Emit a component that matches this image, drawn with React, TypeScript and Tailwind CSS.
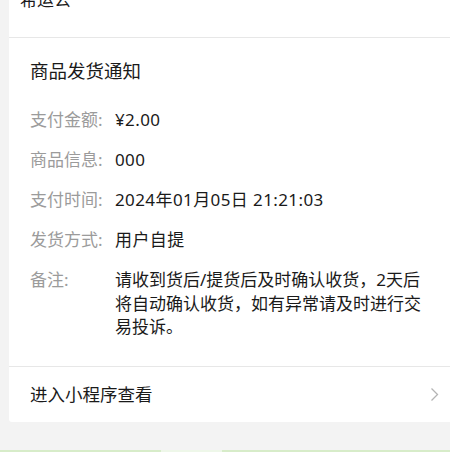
import React from "react";

const rows: { label: string; value: string; note?: boolean }[] = [
  { label: "支付金额:", value: "¥2.00" },
  { label: "商品信息:", value: "000" },
  { label: "支付时间:", value: "2024年01月05日 21:21:03" },
  { label: "发货方式:", value: "用户自提" },
  {
    label: "备注:",
    value:
      "请收到货后/提货后及时确认收货，2天后将自动确认收货，如有异常请及时进行交易投诉。",
    note: true,
  },
];

export default function App() {
  return (
    <div
      className="w-[450px] h-[452px] bg-[#f3f3f3] flex flex-col overflow-hidden"
      style={{ fontFamily: '"Noto Sans", "Noto Sans CJK SC", sans-serif' }}
    >
      <div className="ml-[9px] bg-white rounded-bl-[3px] flex flex-col">
        <div className="h-[38px] border-b border-[#e7e7e7] pl-[11px] overflow-hidden">
          <div className="-mt-[10px] text-[17px] leading-[20px] text-[#1a1a1a]">希运公</div>
        </div>
        <div className="pl-[21px] pr-[16px] pt-[21px] pb-[27px] flex flex-col">
          <div className="text-[18.5px] leading-[24px] text-[#1a1a1a] mb-[25px]">商品发货通知</div>
          <div className="flex flex-col gap-[16.5px]">
            {rows.map((r) => (
              <div key={r.label} className="flex text-[17px] leading-[23.5px]">
                <div className="w-[85px] shrink-0 text-[#9b9b9b]">{r.label}</div>
                <div
                  className={
                    r.note
                      ? "flex-1 text-[#1a1a1a]"
                      : "flex-1 text-[#1a1a1a] tracking-[0.4px]"
                  }
                >
                  {r.value}
                </div>
              </div>
            ))}
          </div>
        </div>
        <div className="h-[56px] border-t border-[#e7e7e7] pl-[21px] pr-[11px] flex items-center justify-between">
          <span className="text-[17.5px] text-[#1a1a1a]">进入小程序查看</span>
          <svg width="9" height="15" viewBox="0 0 9 15" fill="none">
            <polyline points="1.5,1.5 7.5,7.5 1.5,13.5" stroke="#b4b4b4" strokeWidth="1.3" />
          </svg>
        </div>
      </div>
      <div className="flex-1" />
      <div className="h-[2px] flex">
        <div className="w-[161px] bg-[#d7ecc9]" />
        <div className="w-[61px] bg-[#eef7e9]" />
        <div className="flex-1 bg-[#d7ecc9]" />
      </div>
    </div>
  );
}
